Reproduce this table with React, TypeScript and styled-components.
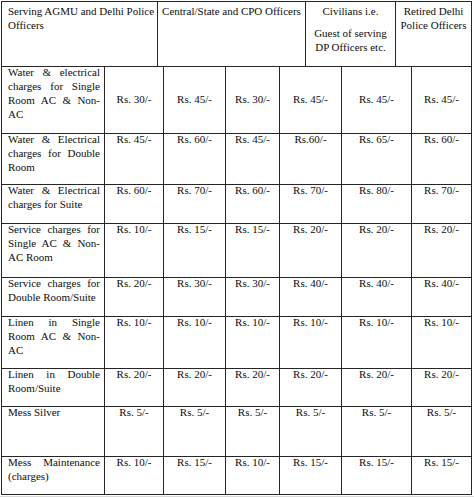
import React from "react";
import styled, { createGlobalStyle } from "styled-components";

const Global = createGlobalStyle`
  html, body { margin: 0; padding: 0; background: #ffffff; }
`;

const Page = styled.div`
  width: 474px;
  height: 497px;
  display: flex;
  flex-direction: column;
  overflow: hidden;
  font-family: "Liberation Serif", "Times New Roman", serif;
  color: #0d0d0d;
`;

const Sheet = styled.div`
  margin: 1px 0 0 1px;
  width: 470px;
  border-top: 1px solid #262626;
  border-left: 1px solid #262626;
  font-family: "Liberation Serif", "Times New Roman", serif;
  font-size: 11px;
  line-height: 14px;
`;

const HeaderGrid = styled.div`
  display: grid;
  grid-template-columns: 156px 148px 90px 76px;
  grid-template-rows: 65px;
`;

const BodyGrid = styled.div`
  display: grid;
  grid-template-columns: 103px 59px 62px 54px 62px 70px 60px;
  grid-template-rows: 67px 51px 39px 54px 39px 52px 38px 50px 38px;
`;

const Cell = styled.div`
  border-right: 1px solid #262626;
  border-bottom: 1px solid #262626;
  overflow: hidden;
`;

const HeadCell = styled(Cell)<{ $left?: boolean }>`
  padding: ${(p) => (p.$left ? "2px 0 0 6px" : "2px 1px 0 1px")};
  text-align: ${(p) => (p.$left ? "left" : "center")};
`;

const HeadPara = styled.p`
  margin: 0;
  & + & { margin-top: 8px; }
`;

const LabelCell = styled(Cell)`
  padding: 0 4px 0 6px;
  text-align: justify;
`;

const ValueCell = styled(Cell)<{ $middle?: boolean }>`
  display: flex;
  justify-content: center;
  align-items: ${(p) => (p.$middle ? "center" : "flex-start")};
  white-space: nowrap;
`;

const Lift = styled.div`
  margin-top: -2px;
`;

const BottomShade = styled.div`
  margin-top: 1px;
  height: 3px;
  background: #d8d8d8;
`;

const header: { lines: string[]; left?: boolean }[] = [
  { lines: ["Serving AGMU and Delhi Police Officers"], left: true },
  { lines: ["Central/State and CPO Officers"] },
  { lines: ["Civilians i.e.", "Guest of serving DP Officers etc."] },
  { lines: ["Retired Delhi Police Officers"] },
];

const rows: { label: string; values: string[]; middle?: boolean }[] = [
  {
    label: "Water & electrical charges for Single Room AC & Non-AC",
    values: ["Rs. 30/-", "Rs. 45/-", "Rs. 30/-", "Rs. 45/-", "Rs. 45/-", "Rs. 45/-"],
    middle: true,
  },
  {
    label: "Water & Electrical charges for Double Room",
    values: ["Rs. 45/-", "Rs. 60/-", "Rs. 45/-", "Rs.60/-", "Rs. 65/-", "Rs. 60/-"],
  },
  {
    label: "Water & Electrical charges for Suite",
    values: ["Rs. 60/-", "Rs. 70/-", "Rs. 60/-", "Rs. 70/-", "Rs. 80/-", "Rs. 70/-"],
  },
  {
    label: "Service charges for Single AC & Non-AC Room",
    values: ["Rs. 10/-", "Rs. 15/-", "Rs. 15/-", "Rs. 20/-", "Rs. 20/-", "Rs. 20/-"],
  },
  {
    label: "Service charges for Double Room/Suite",
    values: ["Rs. 20/-", "Rs. 30/-", "Rs. 30/-", "Rs. 40/-", "Rs. 40/-", "Rs. 40/-"],
  },
  {
    label: "Linen in Single Room AC & Non-AC",
    values: ["Rs. 10/-", "Rs. 10/-", "Rs. 10/-", "Rs. 10/-", "Rs. 10/-", "Rs. 10/-"],
  },
  {
    label: "Linen in Double Room/Suite",
    values: ["Rs. 20/-", "Rs. 20/-", "Rs. 20/-", "Rs. 20/-", "Rs. 20/-", "Rs. 20/-"],
  },
  {
    label: "Mess Silver",
    values: ["Rs. 5/-", "Rs. 5/-", "Rs. 5/-", "Rs. 5/-", "Rs. 5/-", "Rs. 5/-"],
  },
  {
    label: "Mess Maintenance (charges)",
    values: ["Rs. 10/-", "Rs. 15/-", "Rs. 10/-", "Rs. 15/-", "Rs. 15/-", "Rs. 15/-"],
  },
];

export default function App() {
  return (
    <Page>
      <Global />
      <Sheet>
        <HeaderGrid>
          {header.map((h, i) => (
            <HeadCell key={i} $left={h.left}>
              {h.lines.map((l, j) => (
                <HeadPara key={j}>{l}</HeadPara>
              ))}
            </HeadCell>
          ))}
        </HeaderGrid>
        <BodyGrid>
          {rows.map((r, i) => (
            <React.Fragment key={i}>
              <LabelCell>
                <Lift>{r.label}</Lift>
              </LabelCell>
              {r.values.map((v, j) => (
                <ValueCell key={j} $middle={r.middle}>
                  <Lift>{v}</Lift>
                </ValueCell>
              ))}
            </React.Fragment>
          ))}
        </BodyGrid>
      </Sheet>
      <BottomShade />
    </Page>
  );
}
